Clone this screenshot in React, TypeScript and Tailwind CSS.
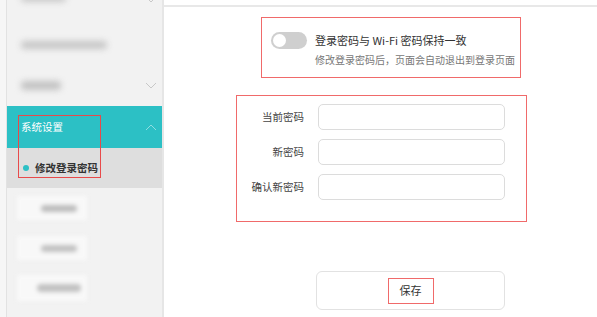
import React from "react";

const font = { fontFamily: '"Noto Sans CJK SC", "Noto Sans", sans-serif' };

function ChevronDown() {
  return (
    <svg width="12" height="7" viewBox="0 0 12 7" fill="none">
      <path d="M1 1l5 5 5-5" stroke="#c8c8c8" strokeWidth="1" />
    </svg>
  );
}
function ChevronUp() {
  return (
    <svg width="12" height="7" viewBox="0 0 12 7" fill="none">
      <path d="M1 6l5-5 5 5" stroke="#8fdde0" strokeWidth="1" />
    </svg>
  );
}

export default function App() {
  return (
    <div className="relative flex h-[317px] w-[597px] overflow-hidden bg-white" style={font}>
      <div className="w-[7px] shrink-0 border-r border-[#e2e2e2] bg-[#f6f6f6]" />
      <div className="flex w-[157px] shrink-0 flex-col border-r-2 border-[#e6e6e6] bg-[#f2f2f2]">
        <div className="relative h-[25px] shrink-0">
          <div className="absolute left-[14px] top-[-6px] h-[8px] w-[45px] rounded bg-[#c9c9c9] blur-[3px]" />
          <div className="absolute right-[5px] top-[-4px]"><ChevronDown /></div>
        </div>
        <div className="flex h-[40px] shrink-0 items-center pl-[14px]">
          <div className="h-[8px] w-[86px] rounded bg-[#c6c6c6] blur-[3px]" />
        </div>
        <div className="flex h-[41px] shrink-0 items-center justify-between pl-[14px] pr-[5px]">
          <div className="h-[9px] w-[40px] rounded bg-[#c2c2c2] blur-[3px]" />
          <ChevronDown />
        </div>
        <div className="flex h-[42px] shrink-0 items-center justify-between bg-[#2cc0c5] pl-[14px] pr-[5px]">
          <span className="text-[10.5px] text-white">系统设置</span>
          <ChevronUp />
        </div>
        <div className="flex h-[40px] shrink-0 items-center bg-[#dedede] pl-[16px]">
          <span className="mr-[6px] h-[6px] w-[6px] rounded-full bg-[#2cc0c5]" />
          <span className="text-[10.5px] font-semibold text-[#333]">修改登录密码</span>
        </div>
        <div className="flex h-[40px] shrink-0 items-center pl-[10px]">
          <div className="flex h-[24px] w-[70px] items-center justify-center bg-[#f8f8f8] blur-[2px]">
            <div className="ml-[14px] h-[7px] w-[36px] rounded bg-[#bdbdbd]" />
          </div>
        </div>
        <div className="flex h-[40px] shrink-0 items-center pl-[10px]">
          <div className="flex h-[24px] w-[70px] items-center justify-center bg-[#f8f8f8] blur-[2px]">
            <div className="ml-[14px] h-[7px] w-[36px] rounded bg-[#c2c2c2]" />
          </div>
        </div>
        <div className="flex h-[40px] shrink-0 items-center pl-[10px]">
          <div className="flex h-[26px] w-[70px] items-center justify-center bg-[#f8f8f8] blur-[2px]">
            <div className="ml-[14px] h-[8px] w-[44px] rounded bg-[#c2c2c2]" />
          </div>
        </div>
      </div>
      <div className="flex flex-1 flex-col">
        <div className="mt-[5px] border-t-2 border-[#e8e8e8]" />
        <div className="flex-1">
          <div className="ml-[97px] mt-[10px] h-[61px] w-[260px] border border-[#f06a6a] pl-[9px] pt-[14px]">
            <div className="flex items-center">
              <div className="flex h-[17px] w-[36px] items-center rounded-full bg-[#cfcfcf] pl-[2px]">
                <div className="h-[13px] w-[13px] rounded-full bg-white" />
              </div>
              <span className="ml-[8px] whitespace-nowrap text-[11px] leading-[17px] text-[#333]">登录密码与 Wi-Fi 密码保持一致</span>
            </div>
            <div className="ml-[44px] mt-[4px] whitespace-nowrap text-[10px] leading-[14px] text-[#777]">
              修改登录密码后，页面会自动退出到登录页面
            </div>
          </div>
          <div className="ml-[72px] mt-[17px] h-[127px] w-[291px] border border-[#f06a6a] pt-[8px]">
            <div className="flex flex-col gap-[9px]">
              {["当前密码", "新密码", "确认新密码"].map((l) => (
                <div key={l} className="flex items-center">
                  <span className="w-[67px] text-right text-[10.5px] text-[#444]">{l}</span>
                  <div className="ml-[14px] h-[26px] w-[187px] rounded-[5px] border border-[#dcdcdc] bg-white" />
                </div>
              ))}
            </div>
          </div>
          <div className="ml-[152px] mt-[49px] flex h-[39px] w-[189px] items-center justify-center rounded-[6px] border border-[#e2e2e2] bg-white">
            <div className="flex h-[26px] w-[46px] items-center justify-center border border-[#f06a6a]">
              <span className="text-[11px] text-[#333]">保存</span>
            </div>
          </div>
        </div>
      </div>
      <div className="pointer-events-none absolute left-[18px] top-[115px] h-[63px] w-[83px] border border-[#e84a4a]" />
    </div>
  );
}
